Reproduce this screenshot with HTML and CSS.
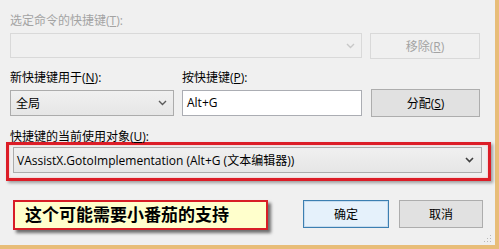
FILE: index.html
```html
<!DOCTYPE html>
<html lang="zh-CN">
<head>
    <meta charset="UTF-8">
    <title>快捷键</title>
    <link rel="stylesheet" href="styles.css">
</head>
<body>
    <div class="window">
        <div class="label disabled row1">选定命令的快捷键(<u>T</u>):</div>
        <div class="grid">
            <div class="combo combo-off span2">
                <span></span>
                <svg class="chev" width="9" height="6" viewBox="0 0 9 6"><path d="M1 1 L4.5 4.5 L8 1" fill="none" stroke="#c8c8c8" stroke-width="1.4"/></svg>
            </div>
            <div class="btn btn-off">移除(<u>R</u>)</div>
        </div>

        <div class="grid row2">
            <div class="label">新快捷键用于(<u>N</u>):</div>
            <div class="label">按快捷键(<u>P</u>):</div>
            <div></div>
            <div class="combo">
                <span>全局</span>
                <svg class="chev" width="9" height="6" viewBox="0 0 9 6"><path d="M1 1 L4.5 4.5 L8 1" fill="none" stroke="#5a5a5a" stroke-width="1.4"/></svg>
            </div>
            <div class="field">Alt+G</div>
            <div class="btn">分配(<u>S</u>)</div>
        </div>

        <div class="label row3">快捷键的当前使用对象(<u>U</u>):</div>
        <div class="mark">
            <div class="combo wide">
                <span>VAssistX.GotoImplementation (Alt+G (文本编辑器))</span>
                <svg class="chev" width="9" height="6" viewBox="0 0 9 6"><path d="M1 1 L4.5 4.5 L8 1" fill="none" stroke="#404040" stroke-width="1.6"/></svg>
            </div>
        </div>

        <div class="bottom">
            <div class="note">这个可能需要小番茄的支持</div>
            <div class="btn btn-ok">确定</div>
            <div class="btn btn-cancel">取消</div>
        </div>
        <div class="grip"></div>
    </div>
</body>
</html>
```

FILE: styles.css
```css
body {
    margin: 0;
    background: #f0f0f0;
    font-family: "Open Sans", "Noto Sans CJK SC", sans-serif;
    font-size: 12px;
    color: #000;
    overflow: hidden;
}

.window {
    position: relative;
    width: 499px;
    height: 249px;
    box-sizing: border-box;
    padding: 12px 0 0 10px;
    border-right: 4px solid #e8bd78;
    border-bottom: 4px solid #e8bd78;
}

u {
    text-decoration: underline;
    text-underline-offset: 1px;
}

.label {
    height: 18px;
    line-height: 18px;
    white-space: nowrap;
}

.disabled {
    color: #a3a3a3;
}

.grid {
    display: grid;
    grid-template-columns: 164px 180px 110px;
    column-gap: 8px;
    margin-top: 3px;
}

.grid > :nth-child(3n) {
    margin-left: 1px;
}

.span2 {
    grid-column: span 2;
}

.row2 {
    margin-top: 10px;
    row-gap: 3px;
}

.row3 {
    margin-top: 11px;
}

.combo {
    height: 26px;
    box-sizing: border-box;
    border: 1px solid #acacac;
    background: linear-gradient(#f0f0f0, #e6e6e6);
    display: flex;
    align-items: center;
    justify-content: space-between;
    padding: 0 6px 0 5px;
}

.combo-off {
    height: 25px;
    border-color: #d9d9d9;
    background: #f0f0f0;
}

.field {
    height: 26px;
    box-sizing: border-box;
    border: 1px solid #abadb3;
    background: #fff;
    line-height: 24px;
    padding-left: 4px;
}

.btn {
    height: 26px;
    box-sizing: border-box;
    border: 1px solid #adadad;
    background: #e1e1e1;
    display: flex;
    align-items: center;
    justify-content: center;
}

.btn-off {
    border-color: #d9d9d9;
    background: #f0f0f0;
    color: #a3a3a3;
}

.row2 .btn {
    height: 28px;
    margin-top: -1px;
}

.mark {
    width: 485px;
    margin: -4px 0 0 -4px;
    box-sizing: border-box;
    border: 3px solid #dc1d27;
    padding: 2px 6px 5px 4px;
    box-shadow: 2px 2px 3px rgba(0, 0, 0, 0.35), inset 0 0 2px rgba(240, 120, 120, 0.6);
}

.wide {
    padding-left: 3px;
    padding-right: 7px;
}

.bottom {
    display: flex;
    align-items: flex-start;
    margin-top: 19px;
}

.note {
    width: 255px;
    height: 30px;
    box-sizing: border-box;
    margin-left: 3px;
    border: 2px solid #d81e26;
    background: #ffffcc;
    box-shadow: 3px 3px 3px rgba(0, 0, 0, 0.55);
    font-size: 17px;
    font-weight: bold;
    line-height: 26px;
    padding-left: 10px;
    white-space: nowrap;
}

.btn-ok {
    width: 86px;
    height: 28px;
    margin-left: 35px;
    border-color: #3c7fb1;
    background: #e5f1fb;
    box-shadow: inset 0 0 0 1px #c6dcef;
}

.btn-cancel {
    width: 84px;
    height: 28px;
    margin-left: 10px;
}

.grip {
    position: absolute;
    right: 4px;
    bottom: 3px;
    width: 8px;
    height: 8px;
    background: radial-gradient(circle, #b8b8b8 0.8px, transparent 1px) 0 0 / 3px 3px;
    clip-path: polygon(100% 0, 100% 100%, 0 100%);
}
```
